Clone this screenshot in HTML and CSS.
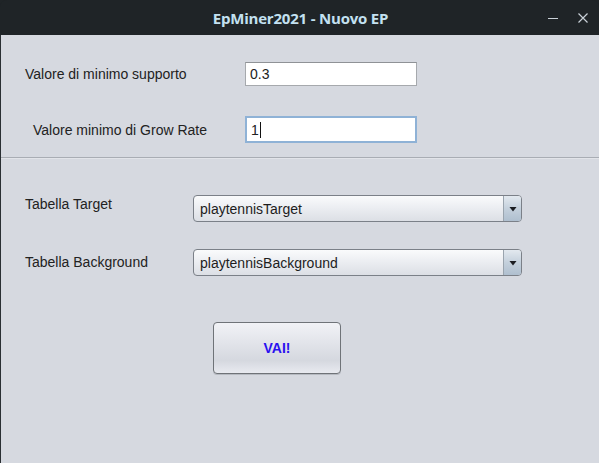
FILE: index.html
```html
<!DOCTYPE html>
<html lang="it">
<head>
<meta charset="utf-8">
<title>EpMiner2021 - Nuovo EP</title>
<link rel="stylesheet" href="styles.css">
</head>
<body>
<div class="window">
  <header class="titlebar">
    <span class="title">EpMiner2021 - Nuovo EP</span>
    <div class="controls">
      <svg class="ctl" width="14" height="14" viewBox="0 0 14 14"><path d="M2 7.5H12" stroke="#c9d1d8" stroke-width="1.2"/></svg>
      <svg class="ctl" width="14" height="14" viewBox="0 0 14 14"><path d="M2.5 2.5L11.5 11.5M11.5 2.5L2.5 11.5" stroke="#c9d1d8" stroke-width="1.2"/></svg>
    </div>
  </header>
  <main class="content">
    <section class="params">
      <div class="prow prow-1">
        <span class="label">Valore di minimo supporto</span>
        <div class="field">0.3</div>
      </div>
      <div class="prow prow-2">
        <span class="label">Valore minimo di Grow Rate</span>
        <div class="field focused">1<span class="caret"></span></div>
      </div>
    </section>
    <div class="sep"></div>
    <section class="tables">
      <div class="trow trow-1">
        <span class="label">Tabella Target</span>
        <div class="combo"><span class="combo-text">playtennisTarget</span><span class="combo-arrow"><svg width="8" height="6" viewBox="0 0 8 6"><path d="M0.5 1H7.5L4 5.5Z" fill="#1b1d22"/></svg></span></div>
      </div>
      <div class="trow trow-2">
        <span class="label">Tabella Background</span>
        <div class="combo"><span class="combo-text">playtennisBackground</span><span class="combo-arrow"><svg width="8" height="6" viewBox="0 0 8 6"><path d="M0.5 1H7.5L4 5.5Z" fill="#1b1d22"/></svg></span></div>
      </div>
    </section>
    <div class="actions">
      <button class="go">VAI!</button>
    </div>
  </main>
</div>
</body>
</html>
```
FILE: styles.css
```css
html, body {
  margin: 0;
  padding: 0;
  background: #1f2427;
}
body {
  width: 599px;
  height: 463px;
  overflow: hidden;
  font-family: "Liberation Sans", Arial, sans-serif;
  font-size: 14px;
  color: #222222;
}
.window {
  display: flex;
  flex-direction: column;
  height: 463px;
  border-radius: 7px 7px 0 0;
  overflow: hidden;
  background: #1f2427;
}
.titlebar {
  height: 35px;
  flex: 0 0 35px;
  display: flex;
  align-items: center;
  justify-content: center;
  position: relative;
  background: #1f2427;
}
.title {
  font-family: "Open Sans", "Noto Sans", sans-serif;
  font-weight: 700;
  font-size: 15px;
  color: #c3e1f1;
  letter-spacing: -0.2px;
  margin-left: 2px;
}
.controls {
  position: absolute;
  right: 9px;
  top: 11px;
  display: flex;
  gap: 16px;
}
.ctl { display: block; }
.content {
  flex: 1;
  background: #d6d9e0;
  border-left: 1px solid #2a2f33;
  display: flex;
  flex-direction: column;
}
.params {
  padding-top: 27px;
  display: flex;
  flex-direction: column;
  gap: 30px;
}
.prow {
  display: flex;
  align-items: center;
}
.prow .label {
  flex: 0 0 auto;
}
.prow-1 .label { width: 220px; padding-left: 24px; }
.prow-2 .label { width: 212px; padding-left: 32px; }
.field {
  width: 166px;
  height: 22px;
  background: #ffffff;
  border: 1px solid #a6a9ad;
  border-top-color: #8f9296;
  padding-left: 4px;
  display: flex;
  align-items: center;
  color: #222;
}
.field.focused {
  height: 23px;
  width: 164px;
  border: 2px solid #8fb2d6;
  padding-left: 4px;
}
.caret {
  display: inline-block;
  width: 1px;
  height: 16px;
  background: #111;
  margin-left: 1px;
}
.sep {
  margin-top: 14px;
  height: 1px;
  background: #a9adb4;
  border-bottom: 1px solid #e2e4e9;
}
.tables {
  padding-top: 36px;
  display: flex;
  flex-direction: column;
  gap: 27px;
}
.trow {
  display: flex;
  align-items: center;
}
.trow .label {
  width: 168px;
  padding-left: 24px;
}
.trow-1 .label { padding-bottom: 10px; }
.trow-2 .label { padding-bottom: 2px; }
.combo {
  width: 327px;
  height: 25px;
  border: 1px solid #7b8088;
  border-radius: 4px;
  background: linear-gradient(#fafbfc 0%, #eceef2 45%, #dcdfe5 100%);
  display: flex;
  align-items: center;
  overflow: hidden;
}
.combo-text {
  flex: 1;
  padding-left: 6px;
  color: #1d1d1d;
}
.combo-arrow {
  flex: 0 0 17px;
  height: 100%;
  border-left: 1px solid #9aa4ae;
  background: linear-gradient(#e3e9ef 0%, #c4d0dc 50%, #afbfcf 100%);
  display: flex;
  align-items: center;
  justify-content: center;
}
.combo-arrow svg { display: block; }
.actions {
  padding-top: 46px;
  padding-left: 212px;
}
.go {
  width: 128px;
  height: 52px;
  border: 1px solid #6f7378;
  border-radius: 4px;
  background: linear-gradient(#f1f2f6 0%, #e2e4ea 40%, #d5d8df 75%, #e8eaf0 100%);
  box-shadow: 0 1px 0 #b6bac1;
  font-family: "Liberation Sans", Arial, sans-serif;
  font-weight: 700;
  font-size: 14px;
  color: #2a12f0;
  padding: 0;
  margin: 0;
}
```
